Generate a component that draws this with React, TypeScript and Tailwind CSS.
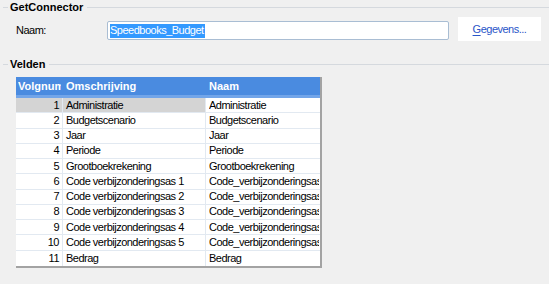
import React from "react";

const rows = [
  [1, "Administratie", "Administratie"],
  [2, "Budgetscenario", "Budgetscenario"],
  [3, "Jaar", "Jaar"],
  [4, "Periode", "Periode"],
  [5, "Grootboekrekening", "Grootboekrekening"],
  [6, "Code verbijzonderingsas 1", "Code_verbijzonderingsas1"],
  [7, "Code verbijzonderingsas 2", "Code_verbijzonderingsas2"],
  [8, "Code verbijzonderingsas 3", "Code_verbijzonderingsas3"],
  [9, "Code verbijzonderingsas 4", "Code_verbijzonderingsas4"],
  [10, "Code verbijzonderingsas 5", "Code_verbijzonderingsas5"],
  [11, "Bedrag", "Bedrag"],
] as const;

// group box caption with the etched line on both sides
const GroupHeader = ({ title }: { title: string }) => (
  <div className="flex h-[14px] items-center pl-[3px]">
    <div className="h-px w-[5px] bg-[#d5d9de]" />
    <span className="ml-[2px] font-bold tracking-normal text-black">{title}</span>
    <div className="ml-[4px] h-px flex-1 bg-[#d5d9de]" />
  </div>
);

export default function App() {
  return (
    <div className="h-[284px] w-[549px] overflow-hidden bg-[#f0f0f0] font-['Liberation_Sans',Arial,sans-serif] text-[11px] leading-none tracking-[-0.5px] text-black">
      <GroupHeader title="GetConnector" />

      {/* Naam row */}
      <div className="mt-[3px] flex h-[24px] items-start">
        <div className="mt-[4px] flex h-[19px] w-[107px] items-center pl-[16px]">Naam:</div>
        <div className="mt-[4px] flex h-[19px] w-[342px] items-center rounded-[2px] border border-[#a9bdd3] bg-white pl-[2px]">
          <span className="flex h-[14px] items-center bg-[#3399ff] pr-px text-white">Speedbooks_Budget</span>
        </div>
        <button className="ml-[9px] flex h-[24px] w-[83px] items-center justify-center bg-white text-[#2a55c8]">
          <span>
            <span className="underline underline-offset-2">G</span>egevens...
          </span>
        </button>
      </div>

      <div className="mt-[16px]">
        <GroupHeader title="Velden" />
      </div>

      {/* grid */}
      <div className="ml-[16px] mt-[6px] w-[306px] border-r-2 border-[#a3a3a3]">
        <div className="flex h-[21px] flex-col bg-[#4a8be0]">
          <div className="flex h-[18px] items-center font-bold tracking-normal text-white">
            <div className="w-[47px] pl-[2px]">
              <div className="w-[43px] overflow-hidden whitespace-nowrap">Volgnummer</div>
            </div>
            <div className="w-[143px] pl-[3px]">Omschrijving</div>
            <div className="flex-1 pl-[3px]">Naam</div>
          </div>
          <div className="h-[3px] bg-[#72a5e9]" />
        </div>
        <div className="border-b-2 border-[#a3a3a3] bg-white">
          {rows.map(([nr, oms, naam], i) => {
            const sel = i === 0;
            return (
              <div key={nr} className="flex h-[15.27px] items-center border-b border-[#e2e9f1] last:border-b-0">
                <div
                  className={`flex h-full w-[46px] items-center justify-end pr-[3px] ${sel ? "bg-[#d4d4d4]" : ""}`}
                >
                  {nr}
                </div>
                <div className="h-full w-px bg-[#e2e9f1]" />
                <div className={`flex h-full w-[142px] items-center pl-[3px] ${sel ? "bg-[#d4d4d4]" : ""}`}>
                  {oms}
                </div>
                <div className="h-full w-px bg-[#e2e9f1]" />
                <div className="flex h-full flex-1 items-center pl-[3px]">
                  <div className="w-[110px] overflow-hidden whitespace-nowrap">{naam}</div>
                </div>
              </div>
            );
          })}
        </div>
      </div>
    </div>
  );
}
